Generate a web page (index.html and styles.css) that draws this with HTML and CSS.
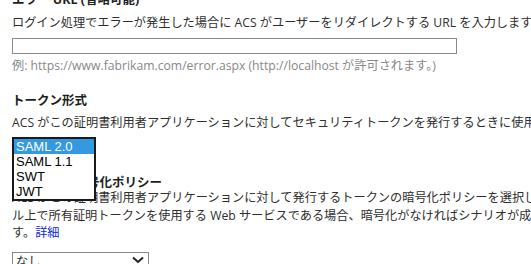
FILE: index.html
```html
<!DOCTYPE html>
<html lang="ja">
<head>
    <meta charset="UTF-8">
    <title>証明書利用者アプリケーションの設定</title>
    <link rel="stylesheet" href="styles.css">
</head>
<body>
    <div class="form">
        <div class="field field-first">
            <h3 class="label">エラー URL (省略可能)</h3>
            <p class="desc">ログイン処理でエラーが発生した場合に ACS がユーザーをリダイレクトする URL を入力します。</p>
            <input type="text" class="text-input">
            <p class="hint">例: https://www.fabrikam.com/error.aspx (http://localhost が許可されます。)</p>
        </div>

        <div class="field field-token">
            <h3 class="label">トークン形式</h3>
            <p class="desc">ACS がこの証明書利用者アプリケーションに対してセキュリティトークンを発行するときに使用するトークン形式を選択します。</p>
            <div class="select-holder">
                <div class="select-box select-token">SAML 2.0</div>
                <!-- open dropdown list -->
                <ul class="listbox">
                    <li class="option selected">SAML 2.0</li>
                    <li class="option">SAML 1.1</li>
                    <li class="option">SWT</li>
                    <li class="option">JWT</li>
                </ul>
            </div>
        </div>

        <div class="field field-enc">
            <h3 class="label">トークンの暗号化ポリシー</h3>
            <p class="desc multi">ACS がこの証明書利用者アプリケーションに対して発行するトークンの暗号化ポリシーを選択します。証明書利用者アプリケーションが SSL チャネ<br>ル上で所有証明トークンを使用する Web サービスである場合、暗号化がなければシナリオが成立しないことがありま<br>す。<a href="#" class="more">詳細</a></p>
            <div class="select-box select-small">
                <span class="select-value">なし</span>
                <svg class="chevron" width="12" height="8" viewBox="0 0 12 8"><path d="M1 1.5 L6 6 L11 1.5" fill="none" stroke="#222" stroke-width="2"/></svg>
            </div>
        </div>
    </div>
</body>
</html>
```

FILE: styles.css
```css
body {
    margin: 0;
    overflow: hidden;
    background: #fff;
    font-family: "Open Sans", "Noto Sans CJK JP", sans-serif;
    font-size: 12.2px;
    color: #2e2e2e;
}
.form {
    padding-left: 12px;
    white-space: nowrap;
}
.field {
    margin: 0;
}
.label {
    margin: 0;
    font-size: 12.5px;
    font-weight: bold;
    line-height: 18px;
    color: #1e1e1e;
}
.desc {
    margin: 5px 0 0;
    line-height: 18px;
}
.field-first {
    margin-top: -9px;
}
.text-input {
    display: block;
    box-sizing: border-box;
    width: 445px;
    height: 16px;
    margin: 6px 0 0;
    padding: 0;
    border: 1px solid #8a8a8a;
}
.hint {
    margin: 3px 0 0;
    line-height: 18px;
    color: #888;
}
.field-token {
    margin-top: 17px;
}
.field-token .desc {
    margin-top: 4px;
}
.select-holder {
    position: relative;
    margin-top: 5px;
    height: 20px;
}
.select-box {
    box-sizing: border-box;
    width: 137px;
    height: 20px;
    border: 1px solid #8a8a8a;
    padding: 0 4px;
    line-height: 18px;
}
.select-token {
    width: 84px;
}
.listbox {
    position: absolute;
    left: 0;
    top: 0;
    width: 84px;
    margin: 0;
    padding: 0;
    list-style: none;
    box-sizing: border-box;
    border: 2px solid #1a1a1a;
    background: #fff;
    font-family: "Liberation Sans", Arial, sans-serif;
    font-size: 13px;
    color: #000;
}
.option {
    height: 15px;
    line-height: 15px;
    padding-left: 2px;
}
.option.selected {
    background: #3399e0;
    color: #fff;
}
.field-enc {
    margin-top: 18px;
}
.field-enc .label {
    line-height: 16px;
}
.field-enc .desc {
    margin-top: -2px;
    line-height: 17.5px;
}
.more {
    color: #1028e0;
    text-decoration: none;
}
.select-small {
    display: flex;
    align-items: flex-start;
    justify-content: space-between;
    margin-top: 10px;
    padding: 0 4px 0 3px;
}
.select-value {
    line-height: 16px;
    margin-top: 1px;
}
.chevron {
    display: block;
    margin-top: 3px;
}
```
